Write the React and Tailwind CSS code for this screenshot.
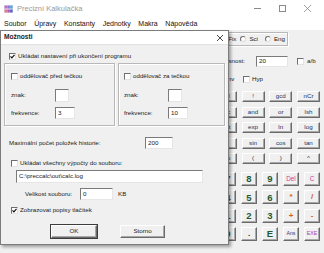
import React from 'react';

const menus = ['Soubor', 'Úpravy', 'Konstanty', 'Jednotky', 'Makra', 'Nápověda'];

const funcRows = [
  ['mod', 'rnd', '!', 'gcd', 'nCr'],
  ['not', 'frac', 'and', 'or', 'lsh'],
  ['x²', 'sqrt', 'exp', 'ln', 'log'],
  ['deg', 'pi', 'sin', 'cos', 'tan'],
  ['rad', 'abs', '(', ')', '^'],
];

const green = 'text-[#1f5a33] font-bold text-[9.5px]';
const pink = 'text-[#d0408c] text-[6.4px]';
const orange = 'text-[#d2601a] font-bold text-[8px]';

const numRows = [
  [['MC', 'text-[#23325e] text-[5.5px]'], ['7', green], ['8', green], ['9', green], ['Del', pink], ['C', pink]],
  [['MR', 'text-[#23325e] text-[5.5px]'], ['4', green], ['5', green], ['6', green], ['*', orange], ['/', orange]],
  [['M+', 'text-[#23325e] text-[5.5px]'], ['1', green], ['2', green], ['3', green], ['+', orange], ['-', orange]],
  [['M-', 'text-[#23325e] text-[5.5px]'], ['0', green], ['.', 'text-[#222] font-bold text-[8px]'], ['E', green], ['Ans', 'text-[#2a3c7c] text-[5.2px]'], ['EXE', 'text-[#a040c0] text-[5.2px]']],
];

function Check({ checked, children, className = '' }) {
  return (
    <div className={`flex items-center h-[7px] ${className}`}>
      <span className="w-[7px] h-[7px] shrink-0 bg-white border border-t-[#6f6f6f] border-l-[#6f6f6f] border-b-[#e3e3e3] border-r-[#e3e3e3] flex items-center justify-center">
        {checked && (
          <svg width="5" height="5" viewBox="0 0 5 5">
            <path d="M0.5 2.4 L1.9 3.9 L4.5 0.8" fill="none" stroke="#111" strokeWidth="1.2" />
          </svg>
        )}
      </span>
      <span className="ml-[2px] whitespace-nowrap leading-none">{children}</span>
    </div>
  );
}

function Radio({ children, className = '' }) {
  return (
    <div className={`flex items-center ${className}`}>
      <span className="w-[6px] h-[6px] rounded-full bg-white border border-t-[#707070] border-l-[#707070] border-b-[#dcdcdc] border-r-[#dcdcdc]" />
      <span className="ml-[3px] leading-none whitespace-nowrap">{children}</span>
    </div>
  );
}

function Field({ className = '', children }) {
  return (
    <div className={`bg-white border border-t-[#7a7a7a] border-l-[#7a7a7a] border-b-[#e6e6e6] border-r-[#e6e6e6] flex items-center pl-[2px] leading-none whitespace-nowrap ${className}`}>
      {children}
    </div>
  );
}

function Btn({ className = '', children }) {
  return (
    <div className={`flex items-center justify-center bg-[#f0f0f0] border border-t-white border-l-white border-b-[#6b6b6b] border-r-[#6b6b6b] shadow-[inset_-1px_-1px_0_#a8a8a8] leading-none whitespace-nowrap overflow-hidden ${className}`}>
      {children}
    </div>
  );
}

function Group({ w, label, znak, freq, pad }) {
  return (
    <div className={`${w} h-[63px] border border-[#b8b8b8] shadow-[inset_1px_1px_0_#fff,1px_1px_0_#fff] flex flex-col`}>
      <Check className={`mt-[9px] ${pad}`}>{label}</Check>
      <div className={`mt-[9px] flex items-center h-[13px] ${pad}`}>
        <span className="w-[44px] leading-none">znak:</span>
        <Field className="w-[14px] h-[13px]">{znak}</Field>
      </div>
      <div className={`mt-[5px] flex items-center h-[12px] ${pad}`}>
        <span className="w-[44px] leading-none">frekvence:</span>
        <Field className="w-[20px] h-[12px]">{freq}</Field>
      </div>
    </div>
  );
}

function Dialog() {
  return (
    <div className="absolute left-0 top-[30px] w-[229px] h-[215px] bg-[#f0f0f0] border border-[#7c7c7c] shadow-[2px_2px_3px_rgba(0,0,0,0.35)] flex flex-col text-[6.2px] text-[#1a1a1a]">
      <div className="h-[14px] shrink-0 bg-white flex items-center pl-[3px] border-b border-[#e2e2e2]">
        <span className="font-bold text-[6.6px] leading-none">Možnosti</span>
        <svg className="ml-auto mr-[5px]" width="6" height="6" viewBox="0 0 6 6">
          <path d="M0 0 L6 6 M6 0 L0 6" stroke="#333" strokeWidth="0.9" />
        </svg>
      </div>
      <Check checked className="mt-[8px] ml-[8px]">Ukládat nastavení při ukončení programu</Check>
      <div className="mt-[3px] ml-[3px] flex gap-[3px]">
        <Group w="w-[111px]" pad="ml-[6px]" label="oddělovač před tečkou" znak="" freq="3" />
        <Group w="w-[107px]" pad="ml-[5px]" label="oddělovač za tečkou" znak="" freq="10" />
      </div>
      <div className="mt-[11px] h-[12px] flex items-center pl-[8px]">
        <span className="w-[136px] leading-none">Maximální počet položek historie:</span>
        <Field className="w-[28px] h-[12px]">200</Field>
      </div>
      <Check className="mt-[11px] ml-[10px]">Ukládat všechny výpočty do souboru:</Check>
      <Field className="mt-[3px] ml-[15px] w-[187px] h-[13px]">C:\preccalc\out\calc.log</Field>
      <div className="mt-[5px] h-[12px] flex items-center pl-[24px]">
        <span className="w-[55px] leading-none">Velikost souboru:</span>
        <Field className="w-[33px] h-[12px]">0</Field>
        <span className="ml-[5px] leading-none">KB</span>
      </div>
      <Check checked className="mt-[7px] ml-[10px]">Zobrazovat popisy tlačítek</Check>
      <div className="mt-[11px] flex">
        <Btn className="ml-[50px] w-[46px] h-[13px] outline outline-1 outline-[#3c3c3c]">OK</Btn>
        <Btn className="ml-[23px] w-[45px] h-[13px]">Storno</Btn>
      </div>
    </div>
  );
}

export default function App() {
  return (
    <div className="relative w-[324px] h-[253px] overflow-hidden bg-[#f0f0f0] font-['Liberation_Sans',Arial,sans-serif] text-black">
      <div className="h-[17px] bg-white flex items-center">
        <svg className="ml-[4px]" width="9" height="8" viewBox="0 0 9 8">
          <rect x="0" y="0" width="9" height="8" fill="#e8e0f0" />
          <rect x="0.5" y="0.5" width="2.5" height="3" fill="#c070c0" />
          <rect x="3.3" y="0.5" width="2.5" height="3" fill="#7a7ad8" />
          <rect x="6.1" y="0.5" width="2.5" height="3" fill="#5aa0e0" />
          <rect x="0.5" y="4.5" width="2.5" height="3" fill="#e07a8a" />
          <rect x="3.3" y="4.5" width="2.5" height="3" fill="#a060c0" />
          <rect x="6.1" y="4.5" width="2.5" height="3" fill="#5c5cc0" />
        </svg>
        <span className="ml-[4px] text-[7.5px] text-[#9a9a9a] leading-none">Precizní Kalkulačka</span>
        <div className="ml-auto mr-[4px] flex h-full">
          <div className="w-[25px] flex items-center justify-center">
            <span className="w-[7px] h-px bg-[#8a8a8a]" />
          </div>
          <div className="w-[25px] flex items-center justify-center">
            <span className="w-[7px] h-[7px] border border-[#8a8a8a]" />
          </div>
          <div className="w-[25px] flex items-center justify-center">
            <svg width="7" height="7" viewBox="0 0 7 7">
              <path d="M0 0 L7 7 M7 0 L0 7" stroke="#8a8a8a" strokeWidth="0.8" />
            </svg>
          </div>
        </div>
      </div>

      <div className="h-[13px] bg-white flex items-center pl-[4px] gap-[7.6px] text-[7px] text-[#111]">
        {menus.map((m) => (
          <span key={m} className="leading-none">{m}</span>
        ))}
      </div>

      <div className="flex h-[223px] text-[6.2px] text-[#1a1a1a]">
        <div className="w-[186px]" />
        <div className="w-[134px] flex flex-col">
          <div className="mt-[2px] ml-[4px] w-[98px] h-[14px] border border-[#b8b8b8] shadow-[inset_1px_1px_0_#fff,1px_1px_0_#fff] flex items-center justify-end pr-[2px]">
            <Radio>Fix</Radio>
            <Radio className="ml-[4px]">Sci</Radio>
            <Radio className="ml-[7px]">Eng</Radio>
          </div>
          <div className="mt-[10px] h-[11px] flex items-center">
            <span className="w-[59px] text-right leading-none">Přesnost:</span>
            <Field className="ml-[11px] w-[32px] h-[11px]">20</Field>
            <Check className="ml-[9px]">
              <span className="ml-[1px]">a/b</span>
            </Check>
          </div>
          <div className="mt-[9px] h-[7px] flex items-center pl-[31px]">
            <Check className="w-[26px]">Inv</Check>
            <Check>Hyp</Check>
          </div>
          <div className="mt-[8px] grid grid-cols-[repeat(5,23px)] auto-rows-[11px] gap-x-[4.75px] gap-y-[4.5px]">
            {funcRows.flat().map((t, i) => (
              <Btn key={i} className="text-[#23325e] text-[6.2px]">{t}</Btn>
            ))}
          </div>
          <div className="mt-[8px] ml-[13px] grid grid-cols-[repeat(6,16px)] auto-rows-[14px] gap-x-[5px] gap-y-[4.33px]">
            {numRows.flat().map(([t, c], i) => (
              <Btn key={i} className={c}>{t}</Btn>
            ))}
          </div>
        </div>
      </div>

      <Dialog />
    </div>
  );
}
